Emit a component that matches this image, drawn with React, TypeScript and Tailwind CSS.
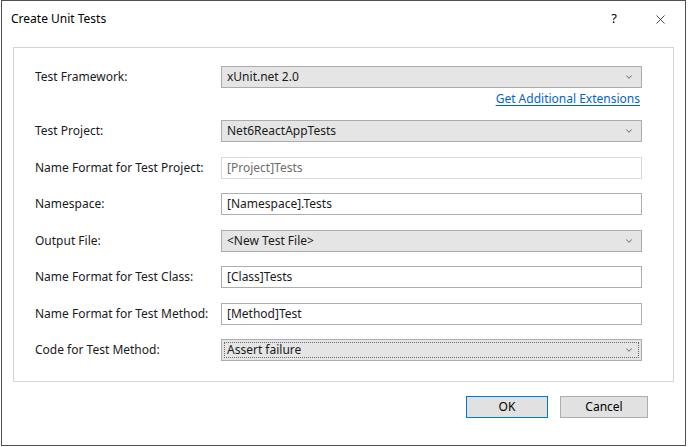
import { ChevronDown, X } from "lucide-react";

const font = { fontFamily: '"Noto Sans", "Segoe UI", sans-serif' };

function Combo({ value, focused }: { value: string; focused?: boolean }) {
  return (
    <div className="relative flex items-center h-[22px] w-[421px] bg-[#e5e5e5] border border-[#acacac] pl-[5px] text-[#1a1a1a]">
      {focused && (
        <div className="absolute inset-[2px] border border-dotted border-[#6a6a6a]" />
      )}
      <span className="flex-1 leading-none">{value}</span>
      <ChevronDown className="w-[10px] h-[10px] mr-[7px] text-[#7a7a7a]" strokeWidth={2.5} />
    </div>
  );
}

function TextBox({ value, disabled }: { value: string; disabled?: boolean }) {
  return (
    <div
      className={
        disabled
          ? "flex items-center h-[22px] w-[421px] bg-white border border-[#d9d9d9] pl-[5px] text-[#6d6d6d]"
          : "flex items-center h-[22px] w-[421px] bg-white border border-[#abadb3] pl-[5px] text-[#1a1a1a]"
      }
    >
      <span className="leading-none">{value}</span>
    </div>
  );
}

function Row({ label, children }: { label: string; children: React.ReactNode }) {
  return (
    <div className="flex items-center h-[22px]">
      <span className="w-[186px] shrink-0 text-[#1a1a1a]">{label}</span>
      {children}
    </div>
  );
}

export default function App() {
  return (
    <div className="w-[689px] h-[447px] bg-white text-[12px]" style={font}>
      <div className="ml-px w-[685px] h-[446px] border border-[#505050] bg-white flex flex-col">
        <div className="flex items-center h-[36px] pl-[9px] pr-[17px]">
          <span className="flex-1 text-[12px] text-black">Create Unit Tests</span>
          <span className="text-[13px] text-black mr-[36px]">?</span>
          <X className="w-[15px] h-[15px] text-[#222]" strokeWidth={1.3} />
        </div>
        <div className="mx-[11px] mt-[10px] border border-[#d5d5d5] pl-[21px] pt-[18px] pb-[20px] flex flex-col">
          <Row label="Test Framework:">
            <Combo value="xUnit.net 2.0" />
          </Row>
          <div className="flex justify-end w-[605px] h-[32px] pt-[3px]">
            <span className="text-[#0066cc] underline underline-offset-2 leading-[16px]">Get Additional Extensions</span>
          </div>
          <div className="flex flex-col gap-[14.5px]">
            <Row label="Test Project:">
              <Combo value="Net6ReactAppTests" />
            </Row>
            <Row label="Name Format for Test Project:">
              <TextBox value="[Project]Tests" disabled />
            </Row>
            <Row label="Namespace:">
              <TextBox value="[Namespace].Tests" />
            </Row>
            <Row label="Output File:">
              <Combo value="<New Test File>" />
            </Row>
            <Row label="Name Format for Test Class:">
              <TextBox value="[Class]Tests" />
            </Row>
            <Row label="Name Format for Test Method:">
              <TextBox value="[Method]Test" />
            </Row>
            <Row label="Code for Test Method:">
              <Combo value="Assert failure" focused />
            </Row>
          </div>
        </div>
        <div className="flex justify-end gap-[12px] mt-[14px] mr-[37px]">
          <button className="w-[82px] h-[22px] bg-[#e1e1e1] border border-[#0078d7] text-black">OK</button>
          <button className="w-[88px] h-[22px] bg-[#e1e1e1] border border-[#adadad] text-black">Cancel</button>
        </div>
      </div>
    </div>
  );
}
